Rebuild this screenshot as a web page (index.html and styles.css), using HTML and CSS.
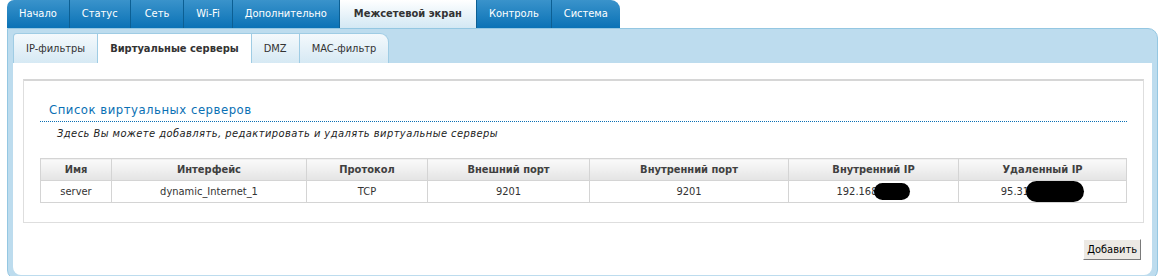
FILE: index.html
```html
<!DOCTYPE html>
<html lang="ru">
<head>
<meta charset="UTF-8">
<title>Виртуальные серверы</title>
<link rel="stylesheet" href="styles.css">
</head>
<body>

<div id="page">
    <div class="topnav">
        <a class="first">Начало</a>
        <a>Статус</a>
        <a class="wide">Сеть</a>
        <a>Wi-Fi</a>
        <a>Дополнительно</a>
        <a class="active">Межсетевой экран</a>
        <a>Контроль</a>
        <a class="last">Система</a>
    </div>

    <div class="panel">
        <div class="subtabs">
            <a>IP-фильтры</a>
            <a class="active">Виртуальные серверы</a>
            <a>DMZ</a>
            <a class="last">MAC-фильтр</a>
        </div>

        <div class="content">
            <div class="box">
                <h2>Список виртуальных серверов</h2>
                <p class="hint">Здесь Вы можете добавлять, редактировать и удалять виртуальные серверы</p>

                <table class="grid">
                    <tr>
                        <th class="c-name">Имя</th>
                        <th class="c-iface">Интерфейс</th>
                        <th class="c-proto">Протокол</th>
                        <th class="c-ext">Внешний порт</th>
                        <th class="c-int">Внутренний порт</th>
                        <th class="c-ip">Внутренний IP</th>
                        <th>Удаленный IP</th>
                    </tr>
                    <tr>
                        <td>server</td>
                        <td>dynamic_Internet_1</td>
                        <td>TCP</td>
                        <td>9201</td>
                        <td>9201</td>
                        <td>192.168<span class="blot"></span></td>
                        <td>95.31<span class="blot wide"></span></td>
                    </tr>
                </table>
            </div>

            <div class="actions">
                <button>Добавить</button>
            </div>
        </div>
    </div>
</div>

</body>
</html>
```

FILE: styles.css
```css
body {
    margin: 0;
    padding: 0;
    background: #ffffff;
    font-family: 'DejaVu Sans Condensed', 'DejaVu Sans', Verdana, sans-serif;
    font-size: 11px;
    color: #333333;
}
#page {
    padding: 0 3px 0 7px;
}

/* top navigation */
.topnav {
    display: flex;
    height: 28px;
}
.topnav a {
    display: block;
    line-height: 28px;
    padding: 0 12px;
    color: #ffffff;
    background: linear-gradient(#3a93cb, #0a72b6);
    border-right: 1px solid #0c5f93;
    white-space: nowrap;
}
.topnav a.first {
    border-top-left-radius: 7px;
}
.topnav a.wide {
    padding: 0 14px;
}
.topnav a.last {
    border-top-right-radius: 9px;
    border-right: none;
}
.topnav a.active {
    color: #333333;
    font-weight: bold;
    background: linear-gradient(#ffffff, #d3e8f4);
    padding: 0 14px;
}

/* blue frame */
.panel {
    background: #bddcee;
    border: 1px solid #94c7e2;
    border-radius: 0 10px 10px 10px;
    padding: 4px 5px 4px 5px;
}
.subtabs {
    display: flex;
    height: 30px;
}
.subtabs a {
    display: block;
    line-height: 30px;
    padding: 0 12px;
    background: linear-gradient(#f4f9fc, #d6e9f4);
    border: 1px solid #9fcce4;
    border-bottom: none;
    border-left: none;
    white-space: nowrap;
}
.subtabs a:first-child {
    border-left: 1px solid #9fcce4;
    border-top-left-radius: 4px;
}
.subtabs a.last {
    border-top-right-radius: 9px;
}
.subtabs a.active {
    background: #ffffff;
    font-weight: bold;
    padding: 0 12px;
}

/* white area */
.content {
    background: #ffffff;
    border-radius: 0 0 8px 8px;
    padding: 16px 8px 15px 10px;
}
.box {
    border: 1px solid #dedede;
    border-top: 2px solid #d6d6d6;
    padding: 21px 16px 19px 16px;
}
h2 {
    margin: 0;
    padding: 0 0 4px 9px;
    font-size: 13px;
    font-weight: normal;
    color: #0a70b4;
    border-bottom: 1px dotted #0a70b4;
    letter-spacing: 0.5px;
}
.hint {
    margin: 5px 0 0 17px;
    font-style: italic;
    color: #222222;
    letter-spacing: 0.45px;
}

.grid {
    width: 100%;
    margin-top: 18px;
    border-collapse: collapse;
}
.grid th,
.grid td {
    border: 1px solid #d4d4d4;
    text-align: center;
    height: 21px;
    padding: 0;
}
.grid th {
    background: linear-gradient(#fafafa, #e4e4e4);
    font-weight: bold;
    color: #404040;
}
.grid td {
    color: #333333;
}
.c-name { width: 70px; }
.c-iface { width: 194px; }
.c-proto { width: 120px; }
.c-ext { width: 161px; }
.c-int { width: 198px; }
.c-ip { width: 169px; }

.blot {
    display: inline-block;
    width: 36px;
    height: 17px;
    margin-left: -3px;
    vertical-align: middle;
    background: #000000;
    border-radius: 9px;
}
.blot.wide {
    width: 58px;
    height: 21px;
    border-radius: 11px;
}

.actions {
    display: flex;
    justify-content: flex-end;
    padding: 16px 3px 0 0;
}
button {
    font-family: 'DejaVu Sans Condensed', 'DejaVu Sans', Verdana, sans-serif;
    font-size: 11px;
    color: #000000;
    background: #ece9e4;
    border: 1px solid;
    border-color: #ffffff #7a7a7a #7a7a7a #ffffff;
    padding: 3px 3px;
    cursor: pointer;
}
```
